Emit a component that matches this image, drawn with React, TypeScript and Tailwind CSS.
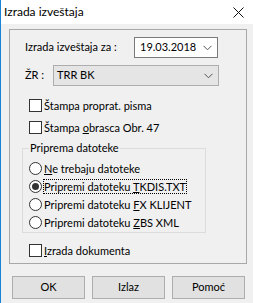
import React from "react";

const font = { fontFamily: 'Lato, "Liberation Sans", sans-serif' };

function Chevron() {
  return (
    <svg width="9" height="6" viewBox="0 0 9 6" className="shrink-0">
      <polyline points="0.5,0.8 4.5,4.8 8.5,0.8" fill="none" stroke="#555" strokeWidth="1" />
    </svg>
  );
}

function Check({ children }: { children: React.ReactNode }) {
  return (
    <div className="flex h-[16px] items-center">
      <div className="h-[13px] w-[13px] shrink-0 border border-[#333] bg-white" />
      <span className="ml-[2px] whitespace-nowrap leading-none">{children}</span>
    </div>
  );
}

function Radio({ children, checked, focus }: { children: React.ReactNode; checked?: boolean; focus?: boolean }) {
  return (
    <div className="flex h-[18px] items-center">
      <div className="flex h-[13px] w-[13px] shrink-0 items-center justify-center rounded-full border border-[#333] bg-white">
        {checked && <div className="h-[7px] w-[7px] rounded-full bg-[#333]" />}
      </div>
      <span
        className={
          focus
            ? "ml-[1px] whitespace-nowrap border border-dotted border-black leading-[13px]"
            : "ml-[2px] whitespace-nowrap leading-none"
        }
      >
        {children}
      </span>
    </div>
  );
}

export default function App() {
  return (
    <div
      className="flex h-[303px] w-[253px] flex-col border-l border-[#1883d7] bg-[#f0f0f0] text-[11px] text-black"
      style={font}
    >
      <div className="flex h-[24px] shrink-0 items-center justify-between bg-white pl-[3px] pr-[9px]">
        <span className="whitespace-nowrap text-[12px]">Izrada izveštaja</span>
        <svg width="11" height="11" viewBox="0 0 11 11">
          <path d="M0.5 0.5 L10.5 10.5 M10.5 0.5 L0.5 10.5" stroke="#111" strokeWidth="1" fill="none" />
        </svg>
      </div>

      <div className="ml-[8px] mt-[5px] flex h-[235px] w-[238px] flex-col border border-[#a8a8a8]">
        <div className="mt-[7px] flex h-[21px] items-center pl-[15px]">
          <span className="w-[109px] whitespace-nowrap">Izrada izveštaja za :</span>
          <div className="flex h-[21px] w-[84px] items-center justify-between border border-[#7a7a7a] bg-white pl-[5px] pr-[5px]">
            <span>19.03.2018</span>
            <Chevron />
          </div>
        </div>

        <div className="mt-[7px] flex h-[21px] items-center pl-[15px]">
          <span className="w-[28px] whitespace-nowrap">ŽR :</span>
          <div className="flex h-[21px] w-[166px] items-center justify-between border border-[#adadad] bg-[#e5e5e5] pl-[3px] pr-[5px]">
            <span>TRR BK</span>
            <Chevron />
          </div>
        </div>

        <div className="mt-[11px] pl-[19px]">
          <Check>Štampa proprat. pisma</Check>
        </div>
        <div className="mt-[6px] pl-[19px]">
          <Check>
            Štampa <u>o</u>brasca Obr. 47
          </Check>
        </div>

        <div className="relative ml-[12px] mt-[13px] h-[85px] w-[184px] border border-[#dcdcdc] pl-[6px] pt-[10px]">
          <span className="absolute left-[6px] top-[-9px] whitespace-nowrap bg-[#f0f0f0] px-[1px] leading-[16px]">Priprema datoteke</span>
          <Radio>
            <u>N</u>e trebaju datoteke
          </Radio>
          <Radio checked focus>
            Pripremi datoteku <u>T</u>KDIS.TXT
          </Radio>
          <Radio>
            Pripremi datoteku <u>F</u>X KLIJENT
          </Radio>
          <Radio>
            Pripremi datoteku <u>Z</u>BS XML
          </Radio>
        </div>

        <div className="mt-[9px] pl-[19px]">
          <Check>
            <u>I</u>zrada dokumenta
          </Check>
        </div>
      </div>

      <div className="ml-[11px] mt-[12px] flex gap-[7px]">
        {["OK", "Izlaz", "Pomoć"].map((t) => (
          <div
            key={t}
            className="flex h-[23px] w-[73px] items-center justify-center border border-[#adadad] bg-[#e1e1e1]"
          >
            {t}
          </div>
        ))}
      </div>
    </div>
  );
}
